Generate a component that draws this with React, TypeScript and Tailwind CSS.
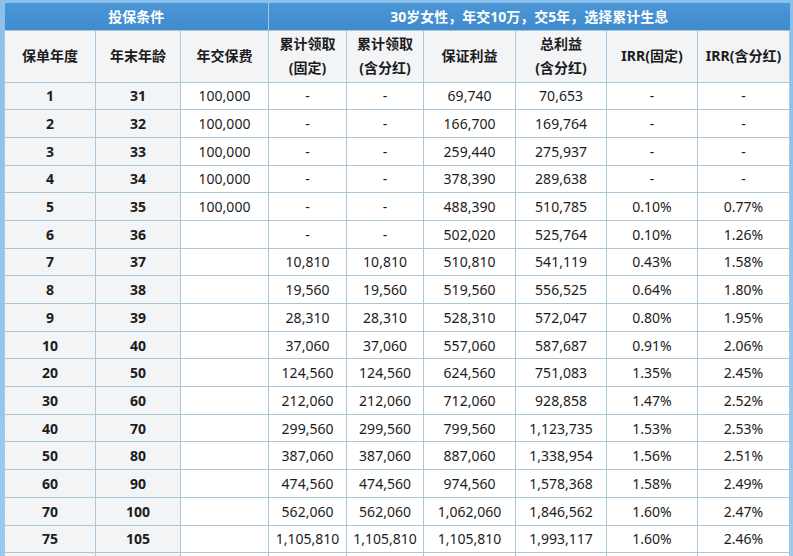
import React from 'react';

const rows: string[][] = [
  ['1', '31', '100,000', '-', '-', '69,740', '70,653', '-', '-'],
  ['2', '32', '100,000', '-', '-', '166,700', '169,764', '-', '-'],
  ['3', '33', '100,000', '-', '-', '259,440', '275,937', '-', '-'],
  ['4', '34', '100,000', '-', '-', '378,390', '289,638', '-', '-'],
  ['5', '35', '100,000', '-', '-', '488,390', '510,785', '0.10%', '0.77%'],
  ['6', '36', '', '-', '-', '502,020', '525,764', '0.10%', '1.26%'],
  ['7', '37', '', '10,810', '10,810', '510,810', '541,119', '0.43%', '1.58%'],
  ['8', '38', '', '19,560', '19,560', '519,560', '556,525', '0.64%', '1.80%'],
  ['9', '39', '', '28,310', '28,310', '528,310', '572,047', '0.80%', '1.95%'],
  ['10', '40', '', '37,060', '37,060', '557,060', '587,687', '0.91%', '2.06%'],
  ['20', '50', '', '124,560', '124,560', '624,560', '751,083', '1.35%', '2.45%'],
  ['30', '60', '', '212,060', '212,060', '712,060', '928,858', '1.47%', '2.52%'],
  ['40', '70', '', '299,560', '299,560', '799,560', '1,123,735', '1.53%', '2.53%'],
  ['50', '80', '', '387,060', '387,060', '887,060', '1,338,954', '1.56%', '2.51%'],
  ['60', '90', '', '474,560', '474,560', '974,560', '1,578,368', '1.58%', '2.49%'],
  ['70', '100', '', '562,060', '562,060', '1,062,060', '1,846,562', '1.60%', '2.47%'],
  ['75', '105', '', '1,105,810', '1,105,810', '1,105,810', '1,993,117', '1.60%', '2.46%'],
];

const widths = [91, 85, 88, 78, 77, 92, 91, 91, 92];

const heads = [
  ['保单年度'],
  ['年末年龄'],
  ['年交保费'],
  ['累计领取', '(固定)'],
  ['累计领取', '(含分红)'],
  ['保证利益'],
  ['总利益', '(含分红)'],
  ['IRR(固定)'],
  ['IRR(含分红)'],
];

export default function App() {
  return (
    <div
      className="w-[793px] h-[556px] overflow-hidden bg-gradient-to-b from-[#8cc0ec] to-[#9cc9ee] pt-[3px] pl-[4px]"
      style={{ fontFamily: '"Noto Sans", "Noto Sans CJK SC", sans-serif' }}
    >
      <table className="table-fixed border-collapse w-[785px] text-[14px] text-[#1c1c1c]">
        <colgroup>
          {widths.map((w, i) => (
            <col key={i} style={{ width: w }} />
          ))}
        </colgroup>
        <thead>
          {/* top banner */}
          <tr className="h-[27px] bg-gradient-to-b from-[#4b96d6] to-[#3f8bcd] text-white font-bold">
            <th colSpan={3} className="border-r border-[#9cc4e6] text-center">
              投保条件
            </th>
            <th colSpan={6} className="text-center">
              30岁女性，年交10万，交5年，选择累计生息
            </th>
          </tr>
          <tr className="h-[52px] bg-[#f3f4f6]">
            {heads.map((h, i) => (
              <th key={i} className="border border-[#a9c7d8] font-bold leading-[24px] text-center">
                {h.map((line, j) => (
                  <div key={j}>{line}</div>
                ))}
              </th>
            ))}
          </tr>
        </thead>
        <tbody>
          {rows.map((r, i) => (
            <tr key={i} className="h-[27.7px]">
              {r.map((c, j) => (
                <td
                  key={j}
                  className={
                    j < 2
                      ? 'border border-[#a9c7d8] bg-[#f3f4f6] text-center font-bold p-0'
                      : 'border border-[#a9c7d8] bg-white text-center p-0'
                  }
                >
                  {c}
                </td>
              ))}
            </tr>
          ))}
          <tr className="h-[27px]">
            {widths.map((_, j) => (
              <td key={j} className={j < 2 ? 'border border-[#a9c7d8] bg-[#f3f4f6]' : 'border border-[#a9c7d8] bg-white'} />
            ))}
          </tr>
        </tbody>
      </table>
    </div>
  );
}
